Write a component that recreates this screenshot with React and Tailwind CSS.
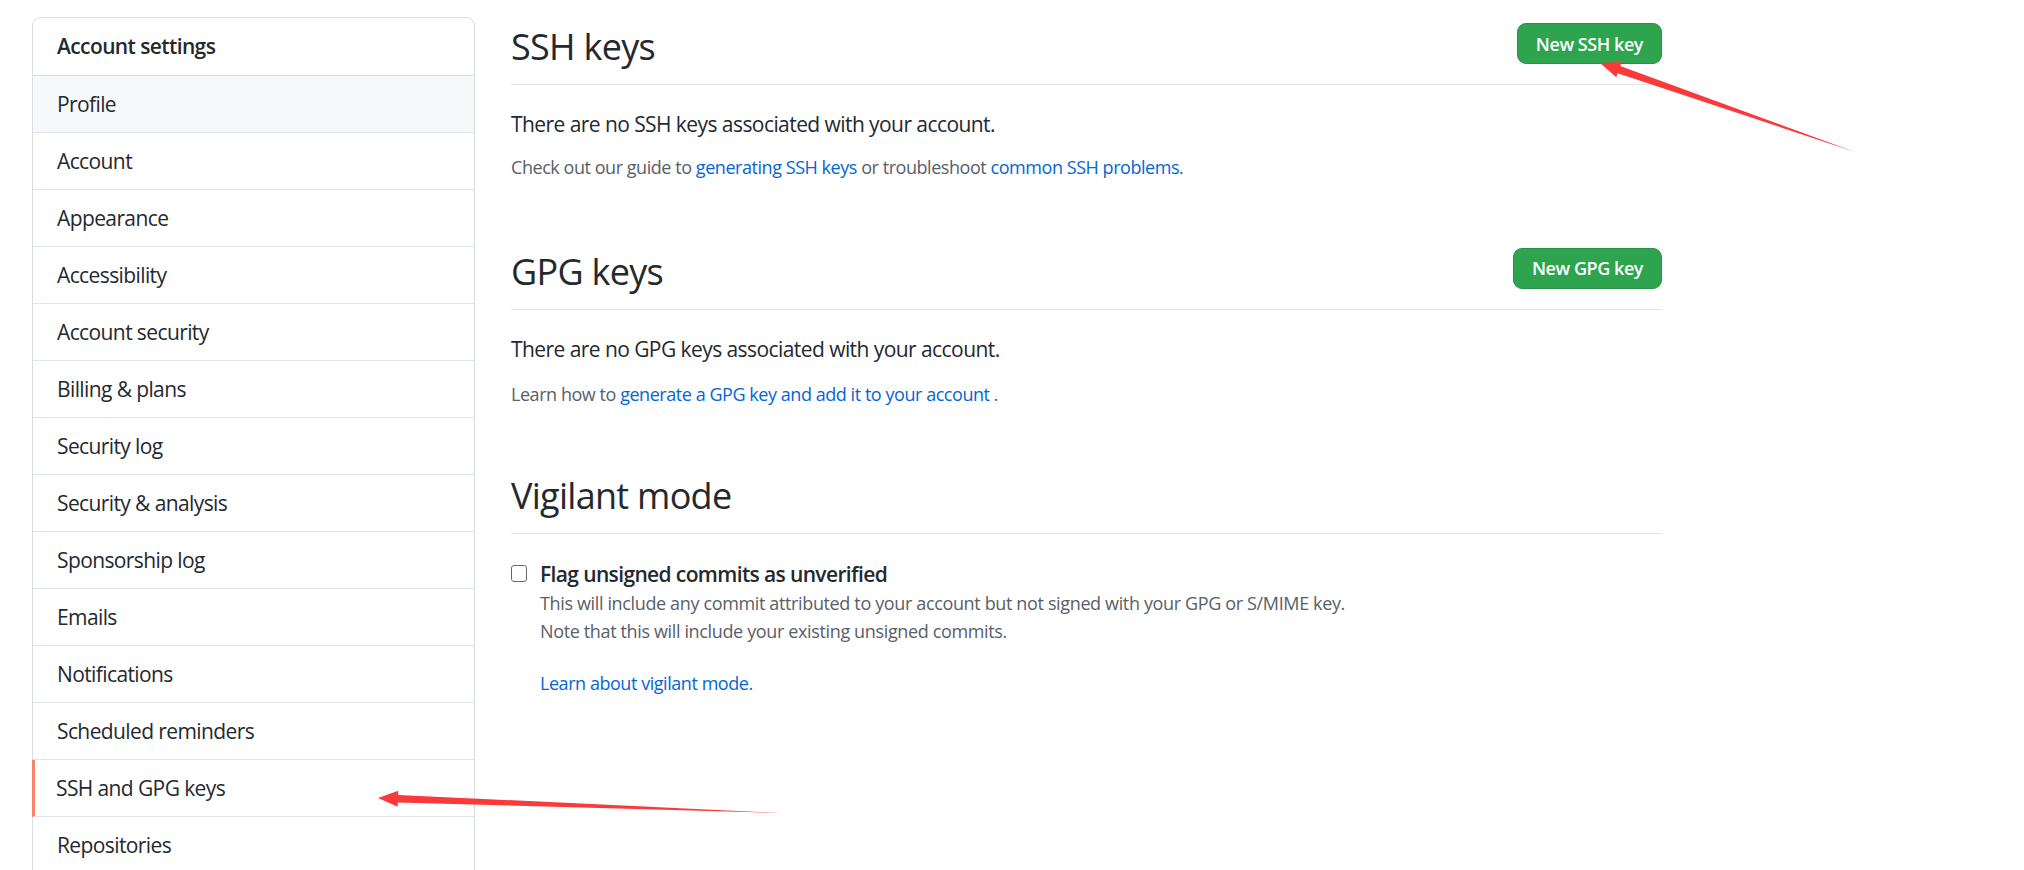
import React from "react";

const items = [
  "Profile",
  "Account",
  "Appearance",
  "Accessibility",
  "Account security",
  "Billing & plans",
  "Security log",
  "Security & analysis",
  "Sponsorship log",
  "Emails",
  "Notifications",
  "Scheduled reminders",
  "SSH and GPG keys",
  "Repositories",
];

function Arrows() {
  return (
    <svg className="absolute left-0 top-0 pointer-events-none" width="2024" height="870" viewBox="0 0 2024 870">
      <polygon
        fill="#fa3a3a"
        points="1600,63 1616.3,77.2 1617.6,73.2 1855,152 1620.2,66 1621.5,62"
      />
      <polygon
        fill="#fa3a3a"
        points="378,798 397.7,806.7 397.85,802.5 781,813 398.1,794.9 398.3,790.75"
      />
    </svg>
  );
}

function Subhead({ title, button }) {
  return (
    <div className="flex items-start justify-between border-b border-[#e1e4e8] pb-[10px]">
      <h2 className="pt-[2px] text-[36px] leading-[54px] font-normal text-[#24292e] tracking-[-0.02em]">{title}</h2>
      {button && (
        <button className="mt-[5px] h-[41px] px-[18px] rounded-[9px] bg-[#2ea44f] border border-[#2a9147] text-white text-[18px] font-semibold leading-none tracking-[-0.025em]">
          {button}
        </button>
      )}
    </div>
  );
}

export default function App() {
  return (
    <div
      className="relative w-[2024px] h-[870px] overflow-hidden bg-white flex items-start text-[#24292e]"
      style={{ fontFamily: '"Open Sans", "Noto Sans", sans-serif' }}
    >
      <nav className="ml-[32px] mt-[17px] w-[443px] shrink-0 border border-[#d8dee4] rounded-t-[9px] tracking-[-0.038em]">
        <div className="h-[58px] flex items-center pl-[24px] pt-[1px] border-b border-[#d8dee4] text-[21px] font-semibold">
          Account settings
        </div>
        {items.map((it, i) => {
          const active = it === "SSH and GPG keys";
          return (
            <div
              key={it}
              className={
                "h-[57px] flex items-center pt-[1px] border-b border-[#e1e4e8] text-[21px] " +
                (i === 0 ? "bg-[#f6f8fa] " : "") +
                (active ? "border-l-[3px] border-l-[#f9826c] pl-[21px] -ml-px" : "pl-[24px]")
              }
            >
              {it}
            </div>
          );
        })}
      </nav>

      <main className="ml-[36px] mt-[18px] w-[1151px] shrink-0">
        <Subhead title="SSH keys" button="New SSH key" />
        <p className="mt-[24px] text-[21px] leading-[31.5px] tracking-[-0.027em]">
          There are no SSH keys associated with your account.
        </p>
        <p className="mt-[13px] text-[18px] leading-[27px] text-[#586069] tracking-[-0.025em]">
          Check out our guide to <span className="text-[#0366d6]">generating SSH keys</span> or troubleshoot{" "}
          <span className="text-[#0366d6]">common SSH problems</span>.
        </p>

        <div className="mt-[62px]">
          <Subhead title="GPG keys" button="New GPG key" />
        </div>
        <p className="mt-[24px] text-[21px] leading-[31.5px] tracking-[-0.027em]">
          There are no GPG keys associated with your account.
        </p>
        <p className="mt-[16px] text-[18px] leading-[27px] text-[#586069] tracking-[-0.025em]">
          Learn how to <span className="text-[#0366d6]">generate a GPG key and add it to your account</span> .
        </p>

        <div className="mt-[59px]">
          <Subhead title="Vigilant mode" />
        </div>
        <div className="mt-[25px] flex items-start">
          <div className="mt-[6px] w-[16px] h-[17px] border-[1.5px] border-[#6a6a6a] rounded-[3px] bg-white shrink-0" />
          <div className="ml-[13px]">
            <div className="text-[21px] leading-[30px] font-semibold tracking-[-0.03em]">
              Flag unsigned commits as unverified
            </div>
            <div className="text-[18px] leading-[28px] text-[#586069] tracking-[-0.02em]">
              This will include any commit attributed to your account but not signed with your GPG or S/MIME key.
              <br />
              Note that this will include your existing unsigned commits.
            </div>
            <div className="mt-[24px] text-[18px] leading-[28px] text-[#0366d6] tracking-[-0.025em]">
              Learn about vigilant mode.
            </div>
          </div>
        </div>
      </main>

      <Arrows />
    </div>
  );
}
